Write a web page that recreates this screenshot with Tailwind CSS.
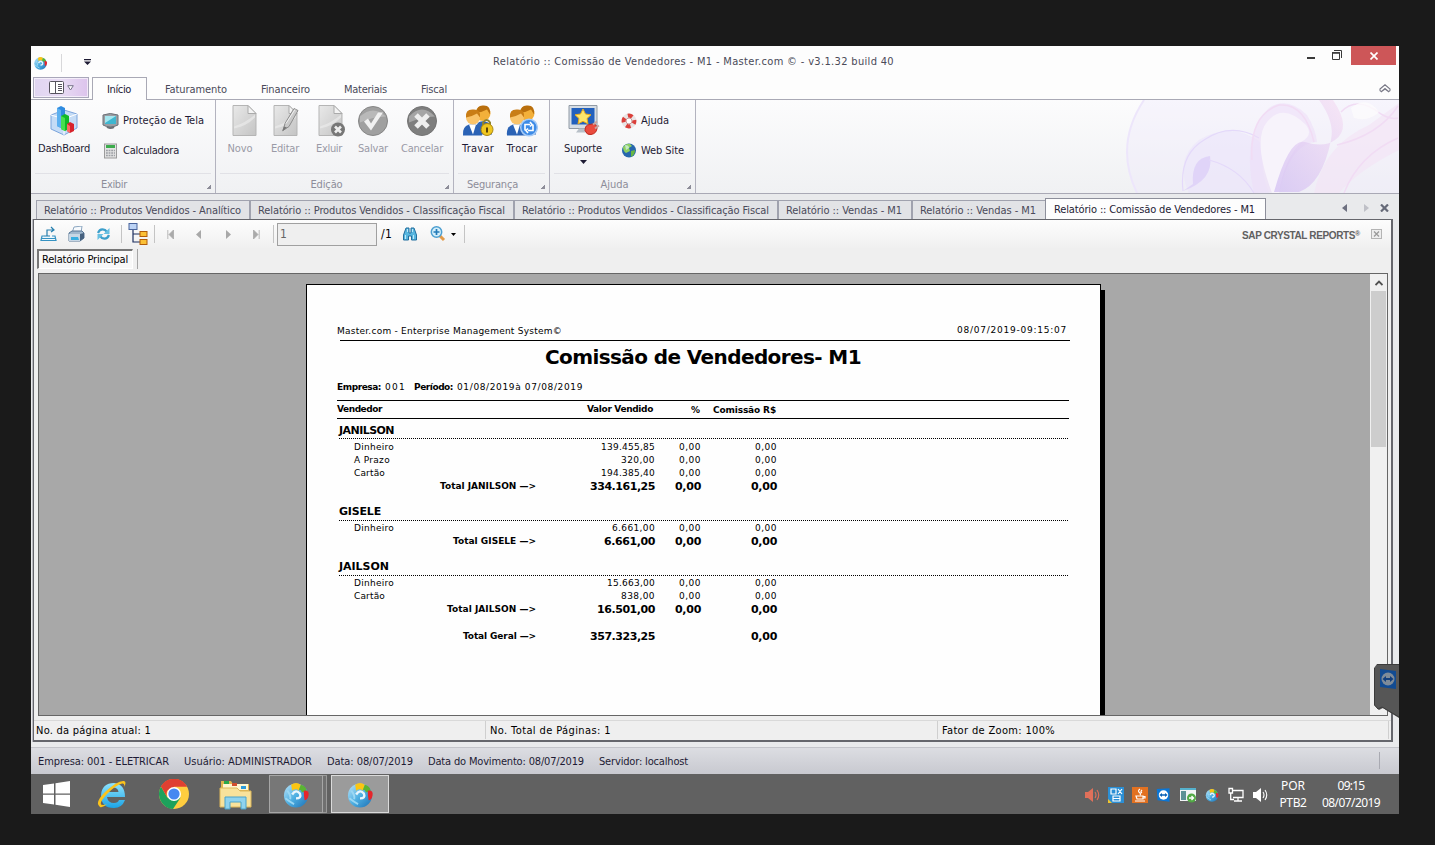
<!DOCTYPE html>
<html lang="pt-BR">
<head>
<meta charset="utf-8">
<title>Relatório :: Comissão de Vendedores - M1</title>
<script src="https://cdn.jsdelivr.net/npm/@tailwindcss/browser@4"></script>
</head>
<body class="h-[845px] w-[1435px] overflow-hidden bg-[#1a1a1a] pt-[46px] pl-[31px] font-['DejaVu_Sans_Condensed','DejaVu_Sans',sans-serif] text-[11px] leading-[14px] text-[#1e1b34]">
<svg class="absolute h-0 w-0">
  <defs>
    <linearGradient id="blue" x1="0" y1="0" x2="1" y2="1"><stop offset="0" stop-color="#bfe6fa"/><stop offset=".5" stop-color="#4fb0e2"/><stop offset="1" stop-color="#1b6fb5"/></linearGradient>
    <linearGradient id="doc" x1="0" y1="0" x2="1" y2="1"><stop offset="0" stop-color="#e9e9e9"/><stop offset="1" stop-color="#c4c4c4"/></linearGradient>
    <linearGradient id="ie" x1="0" y1="0" x2="0" y2="1"><stop offset="0" stop-color="#8fe3fd"/><stop offset="1" stop-color="#1ba4e6"/></linearGradient>
    <linearGradient id="swirl" x1="0" y1="1" x2="1" y2="0"><stop offset="0" stop-color="#cdb8f2"/><stop offset="1" stop-color="#f6def2"/></linearGradient>
    <symbol id="app" viewBox="0 0 28 28">
      <circle cx="14" cy="15" r="12.5" fill="url(#blue)"/>
      <path d="M9 4Q14 0 19 4L17 10Q14 7 10 10Z" fill="#fbc512"/>
      <path d="M19 4Q24 5 25 10L20 12Q20 9 17 9Z" fill="#5bb432"/>
      <path d="M22 10Q28 9 27 15Q26 20 23 20Q22 15 22 10Z" fill="#e5252a"/>
      <path d="M10 14Q14 8 18 13Q20 18 14 18" fill="none" stroke="#e9f6fd" stroke-width="2.5"/>
      <path d="M3 18Q8 22 12 24M5 10Q9 15 8 19" fill="none" stroke="#9ad7f3" stroke-width="2"/>
    </symbol>
    <symbol id="page" viewBox="0 0 32 32"><path d="M5 1H20L28 9V31H5Z" fill="url(#doc)" stroke="#b5b5b5"/><path d="M20 1V9H28Z" fill="#f3f3f3" stroke="#aaa"/><path d="M6 22Q18 18 27 10V13Q18 22 6 24Z" fill="#eee" opacity=".6"/></symbol>
    <symbol id="users" viewBox="0 0 32 32">
      <path d="M15 30V20Q17 16 23 17Q30 18 30 26V30Z" fill="#2f66b5"/><circle cx="21" cy="9" r="7.5" fill="#f3b03a"/><path d="M14 8Q15 0 22 1Q29 1 28 10L25 5Q20 8 14 8Z" fill="#b96f0d"/>
      <path d="M1 31Q0 22 7 20H14Q20 22 20 31Z" fill="#2a62b5"/><path d="M7 20L11 30L14 20Z" fill="#fff"/><circle cx="11" cy="13" r="7" fill="#f9c369"/><path d="M4 13Q3 4 12 5Q19 5 18 13L15 9Q10 12 4 13Z" fill="#c97d16"/>
    </symbol>
    <symbol id="spk" viewBox="0 0 16 16"><path d="M1 5H4L9 1V15L4 11H1Z" fill="currentColor"/><path d="M11 5Q13 8 11 11M13 3Q16.5 8 13 13" fill="none" stroke="currentColor" stroke-width="1.1"/></symbol>
    <symbol id="tv" viewBox="0 0 20 20"><path d="M1 2L18 1V19L2 17Z" fill="#0b76d6"/><circle cx="10" cy="10" r="6.3" fill="#fff"/><path d="M4.5 10L8 7.2V9H12V7.2L15.5 10L12 12.8V11H8V12.8Z" fill="#0b62b6"/></symbol>
  </defs>
</svg>

<div class="relative flex h-[768px] w-[1368px] flex-col bg-[#e9eaec]">

  <!-- Title bar -->
  <header class="flex h-[31px] shrink-0 bg-[#fdfdfd]">
    <svg class="mt-[10px] ml-[2px] h-[14px] w-[15px]"><use href="#app"/></svg>
    <div class="mt-[8px] ml-[13px] h-[18px] w-px bg-[#d8d8da]"></div>
    <svg class="mt-[13px] ml-[22px] h-[7px] w-[7px]" viewBox="0 0 7 7"><path d="M0 0H7V1.3H0ZM0 2.5H7L3.5 6Z" fill="#1e1b34"/></svg>
    <div class="mt-[9px] ml-[402px] w-[401px] text-[#4a4a58]"><span data-w="401">Relatório :: Comissão de Vendedores - M1 - Master.com © - v3.1.32 build 40</span></div>
    <div class="mt-[11px] ml-[413px] h-[2px] w-[8px] bg-[#3a3a3a]"></div>
    <svg class="mt-[4px] ml-[17px] h-[11px] w-[11px]" viewBox="0 0 11 11"><path d="M2 .5H9.5V8M.5 3H7.5V9.5H.5Z" fill="none" stroke="#3a3a3a"/><path d="M0 2.8H8" stroke="#3a3a3a" stroke-width="1.5"/></svg>
    <div class="ml-[8px] flex h-[19px] w-[45px] items-center justify-center bg-[#cd5658]"><svg class="h-[8px] w-[8px]" viewBox="0 0 8 8"><path d="M.5 .5L7.5 7.5M7.5 .5L.5 7.5" stroke="#fff" stroke-width="1.7"/></svg></div>
  </header>

  <!-- Ribbon tabs -->
  <nav class="flex h-[23px] shrink-0 border-b border-[#a9a9b5] bg-[#fdfdfd] text-[#4a4a5a]">
    <div class="mt-0 ml-[2px] flex h-[21px] w-[56px] items-center justify-center gap-[3px] border border-[#a9a7ba] bg-linear-to-r from-[#e0d5f1] via-[#e8dcf4] to-[#dcc3ec] outline -outline-offset-2 outline-white/60">
      <svg class="h-[13px] w-[15px]" viewBox="0 0 15 13"><rect x=".5" y=".5" width="14" height="12" rx="1" fill="#fff" stroke="#57545f"/><path d="M6.5 1V12M9 3.5H13M9 5.5H13M9 7.5H13M9 9.5H13" stroke="#57545f"/></svg>
      <svg class="h-[6px] w-[7px]" viewBox="0 0 7 6"><path d="M.7 .7H6.3L3.5 5Z" fill="#fff" stroke="#77738a"/></svg>
    </div>
    <div class="-mb-px ml-[3px] h-[23px] w-[55px] border border-b-0 border-[#a9a9b5] bg-[#fdfdfd] pt-[5px] pl-[14px] text-[#1e1b34]"><span data-w="24">Início</span></div>
    <div class="ml-[18px] flex pt-[6px]">
      <div class="w-[96px]"><span data-w="62">Faturamento</span></div>
      <div class="w-[83px]"><span data-w="49">Financeiro</span></div>
      <div class="w-[77px]"><span data-w="43">Materiais</span></div>
      <div><span data-w="26">Fiscal</span></div>
    </div>
    <svg class="mt-[7px] mr-[8px] ml-auto h-[10px] w-[12px]" viewBox="0 0 12 10"><path d="M1 5L6 .8L11 5Q11.5 7.5 9 7.3L6 5L3 7.3Q.5 7.5 1 5ZM2 8L6 4.5L10 8" fill="none" stroke="#777785" stroke-width="1.1"/></svg>
  </nav>

  <!-- Ribbon -->
  <section class="relative flex h-[94px] shrink-0 border-b border-[#a9a9b5] bg-linear-to-b from-[#fcfcfd] to-[#f0f1f3]">
    <svg class="absolute top-0 right-0 h-[93px] w-[280px]" viewBox="0 0 280 93">
      <path d="M25 0Q-5 45 18 93H280V0Z" fill="#efe9fb" opacity=".35"/>
      <path d="M25 0Q-5 45 18 93" fill="none" stroke="#ede6fb" stroke-width="2"/>
      <path d="M70 93Q55 60 80 40Q115 20 145 45Q140 70 150 93Z" fill="#e9e2fb" opacity=".5"/>
      <path d="M64 91Q95 80 91 56Q72 58 74 84Z" fill="#d9c9f8" opacity=".65"/>
      <path d="M64 91Q60 55 85 40Q112 22 140 38M90 60Q120 68 135 93" fill="none" stroke="#e4d9fa" stroke-width="1.2"/>
      <path d="M135 93Q122 35 150 8Q168 -4 188 15Q197 30 198 42Q172 42 160 92Z" fill="#ecdcf8" opacity=".55"/>
      <path d="M153 93Q133 40 148 22Q164 2 187 25Q195 35 182 42Q165 60 160 93Z" fill="#f7f3fb"/>
      <path d="M155 92Q170 38 186 42Q205 48 216 40Q233 28 214 0H200Q216 22 212 40Q203 84 180 92Z" fill="url(#swirl)" opacity=".65"/>
      <path d="M195 93Q205 45 250 25L280 3V50Q240 70 220 93Z" fill="#f4e2f5" opacity=".6"/>
      <path d="M133 60Q130 15 160 5Q186 3 195 42M218 45Q260 35 279 6M222 12Q238 -5 262 14Q272 20 279 18M225 93Q240 55 279 38" fill="none" stroke="#f1dcf4" stroke-width="1.5"/>
      <path d="M232 8Q248 -5 260 12Q250 22 235 18Z" fill="#fdfbfd" opacity=".8"/>
    </svg>

    <div class="relative flex h-[93px] w-[185px] flex-col border-r border-[#b3b3bf]">
      <div class="flex h-[73px]">
        <div class="flex w-[66px] flex-col items-center pt-[6px]">
          <svg class="h-[30px] w-[30px]" viewBox="0 0 30 30"><path d="M2 9L15 4L28 8V22L15 29L2 23Z" fill="#c5dcf6" stroke="#7ba4dc"/><path d="M2 9L15 13L28 8M15 13V29" stroke="#fff" fill="none"/><path d="M8 2L12 0L16 2V20L12 22L8 20Z" fill="#2f8be0"/><path d="M8 2L12 4V22L8 20Z" fill="#5cb0f0"/><path d="M12 10L16 8L20 10V23L16 25L12 23Z" fill="#10b928"/><path d="M12 10L16 12V25L12 23Z" fill="#47df4e"/><path d="M18 18L21 16L25 18V25L21 27L18 25Z" fill="#d8232c"/><path d="M18 18L21 20V27L18 25Z" fill="#ff6a64"/></svg>
          <div class="mt-[6px] h-[14px] w-[52px]"><span data-w="52">DashBoard</span></div>
        </div>
        <div class="flex flex-col gap-[14px] pt-[13px] pl-[5px]">
          <div class="flex h-[16px] items-center gap-[4px]">
            <svg class="h-[16px] w-[17px]" viewBox="0 0 17 16"><path d="M1 2Q8 -1 16 2V12Q8 16 1 12Z" fill="#9a9da3" stroke="#6c7077"/><path d="M3 3H14V11H3Z" fill="#3fb6d0"/><path d="M3 3H14L3 10Z" fill="#a5e6ef"/><path d="M5 14Q8 16 12 14" stroke="#6c7077" stroke-width="2" fill="none"/></svg>
            <span data-w="81">Proteção de Tela</span>
          </div>
          <div class="flex h-[16px] items-center gap-[4px]">
            <svg class="h-[16px] w-[17px]" viewBox="0 0 17 16"><rect x="2.5" y="1" width="12" height="14" fill="#e3e3e3" stroke="#9b9b9b"/><rect x="4" y="2" width="9" height="3" fill="#3cab4c"/><path d="M4 7.5H13M4 10H13M4 12.5H13" stroke="#9c9fa4" stroke-width="1.4" stroke-dasharray="1.8 .8"/></svg>
            <span data-w="56">Calculadora</span>
          </div>
        </div>
      </div>
      <div class="mx-[4px] h-px bg-[#e1e1e6]"></div>
      <div class="flex grow items-center justify-center pt-[2px] pr-[18px] text-[#8d8d99]"><span data-w="26">Exibir</span></div>
      <div class="absolute right-[4px] bottom-[4px] h-[4px] w-[4px] bg-linear-to-br from-transparent from-50% to-[#8d8d99] to-50%"></div>
    </div>

    <div class="relative flex h-[93px] w-[238px] flex-col border-r border-[#b3b3bf]">
      <div class="flex h-[73px] pt-[4px] pl-[4px] text-[#9a9aa6]">
        <div class="flex w-[40px] flex-col items-center gap-[5px]"><svg class="ml-[7px] h-[33px] w-[32px]"><use href="#page"/></svg><div class="w-[25px]"><span data-w="25">Novo</span></div></div>
        <div class="ml-[3px] flex w-[44px] flex-col items-center gap-[5px]">
          <svg class="h-[33px] w-[32px]" viewBox="0 0 32 32"><use href="#page"/><path d="M14 26L16 19L25 4L29 6L20 22Z" fill="#c9c9c9" stroke="#8c8c8c"/><path d="M17 19L26 5" stroke="#f1f1f1"/><path d="M13 27L15 22L18 23Z" fill="#777"/></svg>
          <div class="w-[28px]"><span data-w="28">Editar</span></div></div>
        <div class="flex w-[44px] flex-col items-center gap-[5px]">
          <svg class="ml-[5px] h-[33px] w-[32px]" viewBox="0 0 32 32"><use href="#page" x="-2"/><circle cx="22" cy="25" r="7" fill="#777"/><path d="M19 22L25 28M25 22L19 28" stroke="#eee" stroke-width="2.6"/></svg>
          <div class="w-[26px]"><span data-w="26">Exluir</span></div></div>
        <div class="flex w-[44px] flex-col items-center gap-[5px]">
          <svg class="h-[33px] w-[32px]" viewBox="0 0 32 32"><circle cx="16" cy="16.5" r="14.5" fill="#a0a0a0" stroke="#868686"/><path d="M3 12Q16 0 29 12Q16 12 3 18Z" fill="#b9b9b9"/><path d="M7 17L11 14L14 19L21 8H26L14 26Z" fill="#f1f1f1"/></svg>
          <div class="w-[30px]"><span data-w="30">Salvar</span></div></div>
        <div class="ml-[2px] flex w-[50px] flex-col items-center gap-[5px]">
          <svg class="h-[33px] w-[32px]" viewBox="0 0 32 32"><circle cx="16" cy="16.5" r="14.5" fill="#7e7e7e" stroke="#747474"/><path d="M3 12Q16 -2 29 12Q16 12 3 18Z" fill="#a5a5a5"/><path d="M10 10.5L22 22.5M22 10.5L10 22.5" stroke="#eee" stroke-width="5"/></svg>
          <div class="w-[42px]"><span data-w="42">Cancelar</span></div></div>
      </div>
      <div class="mx-[4px] h-px bg-[#e1e1e6]"></div>
      <div class="flex grow items-center justify-center pt-[2px] pr-[16px] text-[#8d8d99]"><span data-w="32">Edição</span></div>
      <div class="absolute right-[4px] bottom-[4px] h-[4px] w-[4px] bg-linear-to-br from-transparent from-50% to-[#8d8d99] to-50%"></div>
    </div>

    <div class="relative flex h-[93px] w-[96px] flex-col border-r border-[#b3b3bf]">
      <div class="flex h-[73px] pt-[4px] pl-[2px]">
        <div class="flex w-[44px] flex-col items-center gap-[5px]">
          <svg class="h-[33px] w-[32px]" viewBox="0 0 32 32"><use href="#users"/><path d="M21 21V18Q25 13 28 18V21" fill="none" stroke="#8d8330" stroke-width="2"/><circle cx="25" cy="25" r="6" fill="#efc61e" stroke="#a98413"/><path d="M25 23V28" stroke="#584108" stroke-width="2"/></svg>
          <div class="w-[32px]"><span data-w="32">Travar</span></div></div>
        <div class="flex w-[44px] flex-col items-center gap-[5px]">
          <svg class="h-[33px] w-[32px]" viewBox="0 0 32 32"><use href="#users"/><circle cx="23" cy="23" r="8.3" fill="#3d8be7" stroke="#a6caf5" stroke-width="1.5"/><path d="M19 26V20H24M27 20V26H22M24 17.5L26 20L24 22M22 24L20 26L22 28.5" fill="none" stroke="#fff" stroke-width="1.6"/></svg>
          <div class="w-[31px]"><span data-w="31">Trocar</span></div></div>
      </div>
      <div class="mx-[4px] h-px bg-[#e1e1e6]"></div>
      <div class="flex grow items-center justify-center pt-[2px] pr-[18px] text-[#8d8d99]"><span data-w="51">Segurança</span></div>
      <div class="absolute right-[4px] bottom-[4px] h-[4px] w-[4px] bg-linear-to-br from-transparent from-50% to-[#8d8d99] to-50%"></div>
    </div>

    <div class="relative flex h-[93px] w-[146px] flex-col border-r border-[#b3b3bf]">
      <div class="flex h-[73px]">
        <div class="flex w-[66px] flex-col items-center gap-[5px] pt-[4px]">
          <svg class="ml-[2px] h-[33px] w-[32px]" viewBox="0 0 32 32"><path d="M1 1H29V24H1Z" fill="#d6dde4" stroke="#909aa5"/><path d="M3.5 3.5H26.5V20H3.5Z" fill="#2260bd"/><path d="M15 4.5L17.5 9.5L23 10.3L19 14L20 19.4L15 16.8L10 19.4L11 14L7 10.3L12.5 9.5Z" fill="#fde76b" stroke="#e9a91c"/><path d="M8 28L11 24H20V28Z" fill="#b8c0c8"/><path d="M17 26Q17 20 22 20Q28 18 29 23Q29 29 23 30Q19 31 17 26Z" fill="#ea4b3e" stroke="#bf281d"/><path d="M25 20L29 17M27 24L31 21" stroke="#c9a5a0" stroke-width="2"/></svg>
          <div class="w-[38px]"><span data-w="38">Suporte</span></div>
          <svg class="-mt-px h-[4px] w-[7px]" viewBox="0 0 7 4"><path d="M0 0H7L3.5 4Z" fill="#1e1b34"/></svg>
        </div>
        <div class="flex flex-col gap-[14px] pt-[13px] pl-[5px]">
          <div class="flex h-[16px] items-center gap-[4px]">
            <svg class="h-[16px] w-[16px]" viewBox="0 0 16 16"><circle cx="8" cy="8" r="5.3" fill="none" stroke="#e8e4e4" stroke-width="4.2"/><circle cx="8" cy="8" r="5.3" fill="none" stroke="#db3f3a" stroke-width="4.2" stroke-dasharray="4.6 3.73" stroke-dashoffset="-6.5"/><circle cx="8" cy="8" r="3" fill="#fff" stroke="#c99"/></svg>
            <span data-w="28">Ajuda</span>
          </div>
          <div class="flex h-[16px] items-center gap-[4px]">
            <svg class="h-[16px] w-[16px]" viewBox="0 0 16 16"><circle cx="8" cy="7.5" r="7" fill="#2667ad"/><path d="M2 4Q5 0 9 1L11 3L8 5L9 8L5 10Q2 8 2 4Z" fill="#8fd160"/><path d="M10 8L14 7Q14 12 10 14Z" fill="#68b743"/><path d="M4 2Q8 2 8 5L5 7Z" fill="#d9f2ef" opacity=".7"/></svg>
            <span data-w="43">Web Site</span>
          </div>
        </div>
      </div>
      <div class="mx-[4px] h-px bg-[#e1e1e6]"></div>
      <div class="flex grow items-center justify-center pt-[2px] pr-[16px] text-[#8d8d99]"><span data-w="28">Ajuda</span></div>
      <div class="absolute right-[4px] bottom-[4px] h-[4px] w-[4px] bg-linear-to-br from-transparent from-50% to-[#8d8d99] to-50%"></div>
    </div>
  </section>

  <!-- Document tabs -->
  <nav class="flex h-[25px] shrink-0 pt-[6px] pl-[5px] text-[#4a4a5a]">
    <div class="w-[215px] border border-r-2 border-b-0 border-[#a0a2ae] bg-[#e2e3e6] pt-[3px] pl-[7px]"><span data-w="197">Relatório :: Produtos Vendidos - Analítico</span></div>
    <div class="w-[264px] border-t border-r-2 border-[#a0a2ae] bg-[#e2e3e6] pt-[3px] pl-[7px]"><span data-w="247">Relatório :: Produtos Vendidos - Classificação Fiscal</span></div>
    <div class="w-[264px] border-t border-r-2 border-[#a0a2ae] bg-[#e2e3e6] pt-[3px] pl-[7px]"><span data-w="247">Relatório :: Produtos Vendidos - Classificação Fiscal</span></div>
    <div class="w-[134px] border-t border-r-2 border-[#a0a2ae] bg-[#e2e3e6] pt-[3px] pl-[7px]"><span data-w="116">Relatório :: Vendas - M1</span></div>
    <div class="w-[132px] border-t border-[#a0a2ae] bg-[#e2e3e6] pt-[3px] pl-[7px]"><span data-w="116">Relatório :: Vendas - M1</span></div>
    <div class="-mt-[2px] -mb-px w-[221px] border border-b-0 border-[#8d8f9b] bg-[#fdfdfd] pt-[4px] pl-[8px] text-[#1e1b34]"><span data-w="201">Relatório :: Comissão de Vendedores - M1</span></div>
    <svg class="mt-[4px] ml-[76px] h-[8px] w-[6px]" viewBox="0 0 6 8"><path d="M5 0V8L0 4Z" fill="#6d7080"/></svg>
    <svg class="mt-[4px] ml-[16px] h-[8px] w-[6px]" viewBox="0 0 6 8"><path d="M0 0V8L5 4Z" fill="#bfc0c7"/></svg>
    <svg class="mt-[4px] ml-[10px] h-[8px] w-[9px]" viewBox="0 0 9 8"><path d="M1 .5L8 7.5M8 .5L1 7.5" stroke="#666a78" stroke-width="2.2"/></svg>
  </nav>

  <!-- Report viewer -->
  <main class="ml-[2px] flex h-[523px] w-[1360px] shrink-0 flex-col border-t border-r-2 border-b-2 border-l border-[#65666c] bg-[#efefef] text-black shadow-[-1px_0_0_#b9bac0]">
    <div class="flex h-[28px] shrink-0 items-center bg-linear-to-b from-[#fdfdfd] to-[#f0f0f0]">
      <svg class="ml-[6px] h-[16px] w-[17px]" viewBox="0 0 17 16"><path d="M4 10H2L1 14.5H16L15 10H12M1 12.5H16" fill="#eef8fd" stroke="#3692c2" stroke-width="1.2"/><path d="M7 10V4H13M11 1L14 4L11 6M4 10H10" fill="none" stroke="#267fae" stroke-width="1.2"/></svg>
      <svg class="ml-[11px] h-[16px] w-[17px]" viewBox="0 0 17 16"><path d="M6 1L14 0L13 7H4Z" fill="#f7fafd" stroke="#8ba6c0"/><path d="M1 7L4 5H14L16 7V12L12 15H1Z" fill="#9fb7cd" stroke="#567493"/><path d="M1 8H12V15H1Z" fill="#c7d7e5"/><path d="M3 11L10 11L11 14H3Z" fill="#38aee1"/><path d="M12 8L16 7V12L12 15Z" fill="#46617e"/></svg>
      <svg class="ml-[11px] h-[14px] w-[15px]" viewBox="0 0 15 14"><path d="M2 6Q4 1 9 3L11 5M13 8Q11 13 6 11L4 9" fill="none" stroke="#3c9fcb" stroke-width="2.2"/><path d="M13.500 1V7H7.500ZM1.500 13V7H7.500Z" fill="#68c0e2"/></svg>
      <div class="ml-[10px] h-[18px] w-px bg-[#c4c4c4]"></div>
      <svg class="ml-[6px] h-[22px] w-[20px]" viewBox="0 0 20 22"><path d="M5 6V19H12M5 11H12" fill="none" stroke="#1d2f5f" stroke-width="1.2"/><rect x="1" y=".5" width="8" height="6" fill="#bcd3f5" stroke="#49649c"/><rect x="12" y="8.500" width="7" height="5" fill="#fbc036" stroke="#b15c0a"/><rect x="12" y="16.500" width="7" height="5" fill="#fbc036" stroke="#b15c0a"/></svg>
      <div class="ml-[6px] h-[18px] w-px bg-[#c4c4c4]"></div>
      <svg class="ml-[12px] h-[9px] w-[7px]" viewBox="0 0 7 9"><path d="M.8 0V9M6.500 0V9L2 4.500Z" fill="#aaa" stroke="#aaa" stroke-width=".8"/></svg>
      <svg class="ml-[22px] h-[9px] w-[5px]" viewBox="0 0 5 9"><path d="M5 0V9L0 4.500Z" fill="#a8a8a8"/></svg>
      <svg class="ml-[25px] h-[9px] w-[5px]" viewBox="0 0 5 9"><path d="M0 0V9L5 4.500Z" fill="#a8a8a8"/></svg>
      <svg class="ml-[22px] h-[9px] w-[7px]" viewBox="0 0 7 9"><path d="M6.200 0V9M.5 0V9L5 4.500Z" fill="#aaa" stroke="#aaa" stroke-width=".8"/></svg>
      <div class="ml-[13px] h-[18px] w-px bg-[#c4c4c4]"></div>
      <div class="ml-[3px] h-[23px] w-[100px] border border-[#a0a0a0] bg-[#efefef] pt-[3px] pl-[2px] text-[12px] text-[#666]">1</div>
      <div class="ml-[4px] w-[11px] text-[12px]"><span data-w="11">/1</span></div>
      <svg class="ml-[11px] h-[14px] w-[14px]" viewBox="0 0 14 14"><path d="M3 1H6V6H8V1H11L13.500 8V13H8.500V9H5.500V13H.5V8Z" fill="#58b6df" stroke="#236f9e"/><path d="M2.500 8V12M10.500 8V12M4.500 2V5M9.500 2V5" stroke="#bfe9f8"/></svg>
      <svg class="ml-[13px] h-[16px] w-[16px]" viewBox="0 0 16 16"><path d="M9 9L14 14" stroke="#e39a48" stroke-width="3"/><circle cx="6.500" cy="6" r="5.200" fill="#d4effb" stroke="#4d9fd0" stroke-width="1.500"/><path d="M3.500 6H9.500M6.500 3V9" stroke="#247bb8" stroke-width="1.700"/></svg>
      <svg class="ml-[5px] h-[3px] w-[5px]" viewBox="0 0 5 3"><path d="M0 0H5L2.500 3Z"/></svg>
      <div class="ml-[8px] h-[18px] w-px bg-[#c4c4c4]"></div>
      <div class="ml-auto flex w-[119px] pt-[4px] font-['Liberation_Sans',sans-serif] text-[10px] font-bold text-[#606060]"><span data-w="113">SAP CRYSTAL REPORTS</span><span class="text-[7px] leading-[9px]">®</span></div>
      <svg class="mr-[9px] ml-[10px] h-[10px] w-[11px]" viewBox="0 0 11 10"><rect x=".5" y=".5" width="10" height="9" fill="#eee" stroke="#b4b4b4"/><path d="M3 2.500L8 7.500M8 2.500L3 7.500" stroke="#9a9a9a" stroke-width="1.300"/></svg>
    </div>

    <div class="flex h-[25px] shrink-0">
      <div class="mt-[1px] ml-[3px] h-[20px] w-[96px] border-t-2 border-r border-b border-l-2 border-[#777] border-r-white border-b-white bg-[#f8f8f8] pt-[2px] pl-[3px]"><span data-w="86">Relatório Principal</span></div>
      <div class="mt-[1px] ml-[4px] h-[20px] w-px bg-[#a5a5a5]"></div>
    </div>

    <div class="ml-[4px] flex h-[443px] w-[1350px] shrink-0 overflow-hidden border border-[#666] bg-[#a8a8a8]">
      <div class="flex w-[1331px]">
        <article class="mt-[10px] ml-[267px] h-[440px] w-[795px] border border-black bg-[#fefefe] pt-[38px] pl-[30px] font-['DejaVu_Sans','Verdana',sans-serif] text-[9px] leading-[13px]">
          <div class="ml-[3px] flex h-[18px] w-[730px] border-b border-black">
            <div class="-ml-[3px] w-[225px] pt-[2px]"><span data-w="225">Master.com - Enterprise Management System©</span></div>
            <div class="ml-[395px] w-[110px] pt-px"><span data-w="110">08/07/2019-09:15:07</span></div>
          </div>
          <h1 class="h-[32px] w-[524px] pt-[2px] pl-[208px] text-[20px] leading-[28px] font-bold"><span data-w="316">Comissão de Vendedores- M1</span></h1>
          <div class="flex h-[27px] items-center pt-[2px]">
            <b class="w-[48px]"><span data-w="44">Empresa:</span></b>
            <div class="w-[29px]"><span data-w="21">001</span></div>
            <b class="w-[43px]"><span data-w="39">Período:</span></b>
            <div><span data-w="126">01/08/2019à 07/08/2019</span></div>
          </div>
          <div class="grid h-[19px] w-[732px] grid-cols-[199px_117px_48px_75px] items-center border-y border-black font-bold">
            <div><span data-w="45">Vendedor</span></div>
            <div class="text-right"><span data-w="66">Valor Vendido</span></div>
            <div class="pt-px text-right"><span data-w="10">%</span></div>
            <div class="pt-px text-right"><span data-w="63">Comissão R$</span></div>
          </div>

          <div class="ml-[2px] h-[20px] w-[729px] border-b border-dotted border-black pt-[5px] text-[11px] font-bold"><span data-w="55">JANILSON</span></div>
          <div class="mt-[2px] grid h-[13px] w-[440px] grid-cols-[199px_119px_46px_76px] text-right"><div class="pl-[17px] text-left"><span data-w="40">Dinheiro</span></div><div><span data-w="54">139.455,85</span></div><div><span data-w="22">0,00</span></div><div><span data-w="22">0,00</span></div></div>
          <div class="grid h-[13px] w-[440px] grid-cols-[199px_119px_46px_76px] text-right"><div class="pl-[17px] text-left"><span data-w="36">A Prazo</span></div><div><span data-w="34">320,00</span></div><div><span data-w="22">0,00</span></div><div><span data-w="22">0,00</span></div></div>
          <div class="grid h-[13px] w-[440px] grid-cols-[199px_119px_46px_76px] text-right"><div class="pl-[17px] text-left"><span data-w="31">Cartão</span></div><div><span data-w="54">194.385,40</span></div><div><span data-w="22">0,00</span></div><div><span data-w="22">0,00</span></div></div>
          <div class="grid h-[14px] w-[440px] grid-cols-[199px_119px_46px_76px] text-right font-bold"><div><span data-w="96">Total JANILSON —&gt;</span></div><div class="text-[11px]"><span data-w="65">334.161,25</span></div><div class="text-[11px]"><span data-w="26">0,00</span></div><div class="text-[11px]"><span data-w="26">0,00</span></div></div>

          <div class="mt-[7px] ml-[2px] h-[20px] w-[729px] border-b border-dotted border-black pt-[4px] text-[11px] font-bold"><span data-w="42">GISELE</span></div>
          <div class="mt-px grid h-[13px] w-[440px] grid-cols-[199px_119px_46px_76px] text-right"><div class="pl-[17px] text-left"><span data-w="40">Dinheiro</span></div><div><span data-w="43">6.661,00</span></div><div><span data-w="22">0,00</span></div><div><span data-w="22">0,00</span></div></div>
          <div class="grid h-[14px] w-[440px] grid-cols-[199px_119px_46px_76px] text-right font-bold"><div><span data-w="83">Total GISELE —&gt;</span></div><div class="text-[11px]"><span data-w="51">6.661,00</span></div><div class="text-[11px]"><span data-w="26">0,00</span></div><div class="text-[11px]"><span data-w="26">0,00</span></div></div>

          <div class="mt-[7px] ml-[2px] h-[20px] w-[729px] border-b border-dotted border-black pt-[4px] text-[11px] font-bold"><span data-w="50">JAILSON</span></div>
          <div class="mt-px grid h-[13px] w-[440px] grid-cols-[199px_119px_46px_76px] text-right"><div class="pl-[17px] text-left"><span data-w="40">Dinheiro</span></div><div><span data-w="48">15.663,00</span></div><div><span data-w="22">0,00</span></div><div><span data-w="22">0,00</span></div></div>
          <div class="grid h-[13px] w-[440px] grid-cols-[199px_119px_46px_76px] text-right"><div class="pl-[17px] text-left"><span data-w="31">Cartão</span></div><div><span data-w="34">838,00</span></div><div><span data-w="22">0,00</span></div><div><span data-w="22">0,00</span></div></div>
          <div class="grid h-[14px] w-[440px] grid-cols-[199px_119px_46px_76px] text-right font-bold"><div><span data-w="89">Total JAILSON —&gt;</span></div><div class="text-[11px]"><span data-w="58">16.501,00</span></div><div class="text-[11px]"><span data-w="26">0,00</span></div><div class="text-[11px]"><span data-w="26">0,00</span></div></div>
          <div class="mt-[13px] grid h-[14px] w-[440px] grid-cols-[199px_119px_46px_76px] text-right font-bold"><div><span data-w="73">Total Geral —&gt;</span></div><div class="text-[11px]"><span data-w="65">357.323,25</span></div><div></div><div class="text-[11px]"><span data-w="26">0,00</span></div></div>
        </article>
        <div class="mt-[16px] h-[440px] w-[4px] bg-black"></div>
      </div>
      <div class="w-[17px] bg-[#f0f0f0]">
        <div class="flex h-[17px] items-center justify-center"><svg class="h-[6px] w-[8px]" viewBox="0 0 8 6"><path d="M.5 5L4 1.500L7.500 5" fill="none" stroke="#505050" stroke-width="1.800"/></svg></div>
        <div class="ml-px h-[156px] w-[15px] bg-[#cdcdcd]"></div>
      </div>
    </div>

    <div class="mt-[4px] flex h-[19px] shrink-0 border-t border-[#d9d9d9] pt-[3px]">
      <div class="-mt-[3px] w-[452px] border-r border-[#cfcfcf] pt-[3px] pl-[2px]"><span data-w="115">No. da página atual: 1</span></div>
      <div class="-mt-[3px] w-[452px] border-r border-[#cfcfcf] pt-[3px] pl-[4px]"><span data-w="121">No. Total de Páginas: 1</span></div>
      <div class="-mt-[3px] mr-[2px] grow border-r border-[#cfcfcf] pt-[3px] pl-[4px]"><span data-w="113">Fator de Zoom: 100%</span></div>
    </div>
  </main>

  <!-- Application status bar -->
  <footer class="mt-[5px] flex h-[27px] shrink-0 border-t border-[#c3c4ca] bg-linear-to-b from-[#dcdde2] to-[#c8c9d0] pt-[7px] pl-[7px]">
    <div class="w-[146px]"><span data-w="131">Empresa: 001 - ELETRICAR</span></div>
    <div class="w-[143px]"><span data-w="128">Usuário: ADMINISTRADOR</span></div>
    <div class="w-[101px]"><span data-w="86">Data: 08/07/2019</span></div>
    <div class="w-[171px]"><span data-w="156">Data do Movimento: 08/07/2019</span></div>
    <div><span data-w="89">Servidor: localhost</span></div>
    <div class="-mt-[3px] mr-[19px] ml-auto h-[17px] w-px bg-[#a9aab2]"></div>
  </footer>

  <!-- Taskbar -->
  <div class="flex h-[40px] shrink-0 items-center bg-[#616161] font-['Noto_Sans','Open_Sans',sans-serif] text-[12px] text-white">
    <svg class="ml-[12px] h-[26px] w-[27px]" viewBox="0 0 27 26"><path d="M0 4L11 2.500V12.500H0ZM12.500 2.300L27 0V12.500H12.500ZM0 13.800H11V23.500L0 22ZM12.500 13.800H27V26L12.500 23.800Z" fill="#fff"/></svg>
    <svg class="ml-[26px] h-[32px] w-[32px]" viewBox="0 0 32 32"><path d="M29 19H11Q12 25 18 25Q22 25 23 22H29Q26 30 18 30Q5 30 5 17Q6 5 18 5Q29 6 29 19ZM11.500 14H22.500Q22 9.500 17 9.500Q12.500 9.500 11.500 14Z" fill="url(#ie)"/><path d="M4 29Q-2 25 9 14Q22 2 28 3Q31 4 28 9Q29 5 26 5.500Q20 7 11 16Q1 27 7 27Q9 27 11 26Q7 30 4 29Z" fill="#fbc31c"/></svg>
    <svg class="ml-[31px] h-[30px] w-[30px]" viewBox="0 0 30 30"><circle cx="15" cy="15" r="15" fill="#ffcd3f"/><path d="M15 15L2 7.500A15 15 0 0 1 28 7.500H15Z" fill="#df4032"/><path d="M2 7.500A15 15 0 0 0 14 30L21.500 18.700L15 15L8.500 18.700Z" fill="#1da15c"/><path d="M2 7.500A15 15 0 0 1 28 7.500H15A7.500 7.500 0 0 0 8.500 18.700Z" fill="#df4032"/><circle cx="15" cy="15" r="7" fill="#fff"/><circle cx="15" cy="15" r="5.600" fill="#4688f1"/></svg>
    <svg class="ml-[30px] h-[32px] w-[33px]" viewBox="0 0 33 32"><path d="M2 3H12L14 6H30V28H2Z" fill="#e0b44f"/><path d="M4 6H29V12H4Z" fill="#fff6d0"/><path d="M5 3H10V6H5Z" fill="#2ba84c"/><path d="M13 5H18V8H13Z" fill="#d24d2e"/><path d="M22 8H27V11H22Z" fill="#2c9bd9"/><path d="M1 10H18L21 13H32V29H1Z" fill="#f8e29b" stroke="#dcb75a"/><path d="M6 31V19H27V31H22V24H11V31Z" fill="#8fd3ee" stroke="#4ba3ca"/></svg>
    <div class="ml-[17px] flex h-[38px] w-[54px] items-center justify-center border border-[#a6a6a6] bg-[#777]"><svg class="h-[27px] w-[28px]"><use href="#app"/></svg></div>
    <div class="h-[38px] w-[4px] border border-l-0 border-[#999] bg-[#707070]"></div>
    <div class="ml-[4px] flex h-[38px] w-[58px] items-center justify-center border border-[#dadada] bg-[#9b9b9b]"><svg class="h-[27px] w-[28px]"><use href="#app"/></svg></div>
    <div class="ml-auto flex items-center gap-[8px] pt-[2px]">
      <svg class="h-[16px] w-[16px] text-[#e0705a]"><use href="#spk"/></svg>
      <svg class="h-[16px] w-[16px]" viewBox="0 0 16 16"><rect width="16" height="16" fill="#2b8fd5"/><path d="M3 2H8V7H3ZM5 9V14H12V9ZM10 2L14 7M14 2L10 7M5 11.500H12" fill="none" stroke="#fff" stroke-width="1.200"/><path d="M0 12L4 16H0Z" fill="#f2c52c"/></svg>
      <svg class="h-[16px] w-[16px]" viewBox="0 0 16 16"><rect width="16" height="16" fill="#e27121"/><path d="M8 2Q5 4 8 6Q9 7 8 8M10 3Q8 5 10 6M4 9H11V12H5ZM11 9.500H13V11H11M3 14H13" fill="none" stroke="#fff" stroke-width="1.200"/></svg>
      <svg class="h-[16px] w-[15px]"><use href="#tv"/></svg>
      <svg class="ml-px h-[16px] w-[16px]" viewBox="0 0 16 16"><path d="M0 1H16V14H0Z" fill="#f2f4f6"/><path d="M0 1H16V3H0Z" fill="#55b1cd"/><path d="M1 4H6V13H1Z" fill="#5c9196"/><circle cx="11.500" cy="11" r="4.500" fill="#52a946"/><path d="M9 11H13M11.500 9L13.500 11L11.500 13" fill="none" stroke="#fff" stroke-width="1.300"/></svg>
      <svg class="h-[14px] w-[16px]"><use href="#app"/></svg>
      <svg class="h-[16px] w-[16px]" viewBox="0 0 16 16"><path d="M5 3.500H15V10.500H5M10 11V13.500M6 14H14M1 1.500H4.500V6H1ZM2.700 6V12.500H6" fill="none" stroke="#fff" stroke-width="1.300"/></svg>
      <svg class="h-[16px] w-[16px] text-white"><use href="#spk"/></svg>
    </div>
    <div class="ml-[8px] flex h-[34px] w-[34px] flex-col items-center justify-between leading-[17px]"><span data-w="24">POR</span><span data-w="27">PTB2</span></div>
    <div class="mr-[18px] ml-[11px] flex h-[34px] w-[60px] flex-col items-center justify-between leading-[17px]"><span data-w="27">09:15</span><span data-w="58">08/07/2019</span></div>
  </div>

  <!-- Docked remote-session handle -->
  <svg class="absolute top-[618px] right-0 h-[54px] w-[26px]" viewBox="0 0 26 54"><path d="M4 0H26V54L13 46L10 44L6 46L1 41V4Z" fill="#565656"/><path d="M4 .5H26M1.500 4V41L5 45L9 43L26 53" fill="none" stroke="#3c3c3c"/><path d="M7 5L23 7V25L7 23Z" fill="#124b92"/><circle cx="15" cy="15" r="6.500" fill="#7e8b99"/><path d="M9.500 15L13 12V14H17V12L20.500 15L17 18V16H13V18Z" fill="#123f7e"/></svg>
</div>

<script>
// Each label carries its design width; letter spacing is adjusted so the label fills it.
function fit() {
  document.querySelectorAll('[data-w]').forEach(function (el) {
    el.className = 'inline-block whitespace-nowrap';
    el.style.letterSpacing = '0px';
    var natural = el.getBoundingClientRect().width;
    el.style.letterSpacing = (Number(el.dataset.w) - natural) / el.textContent.length + 'px';
  });
}
window.addEventListener('load', fit);
new ResizeObserver(fit).observe(document.body);
</script>
</body>
</html>
